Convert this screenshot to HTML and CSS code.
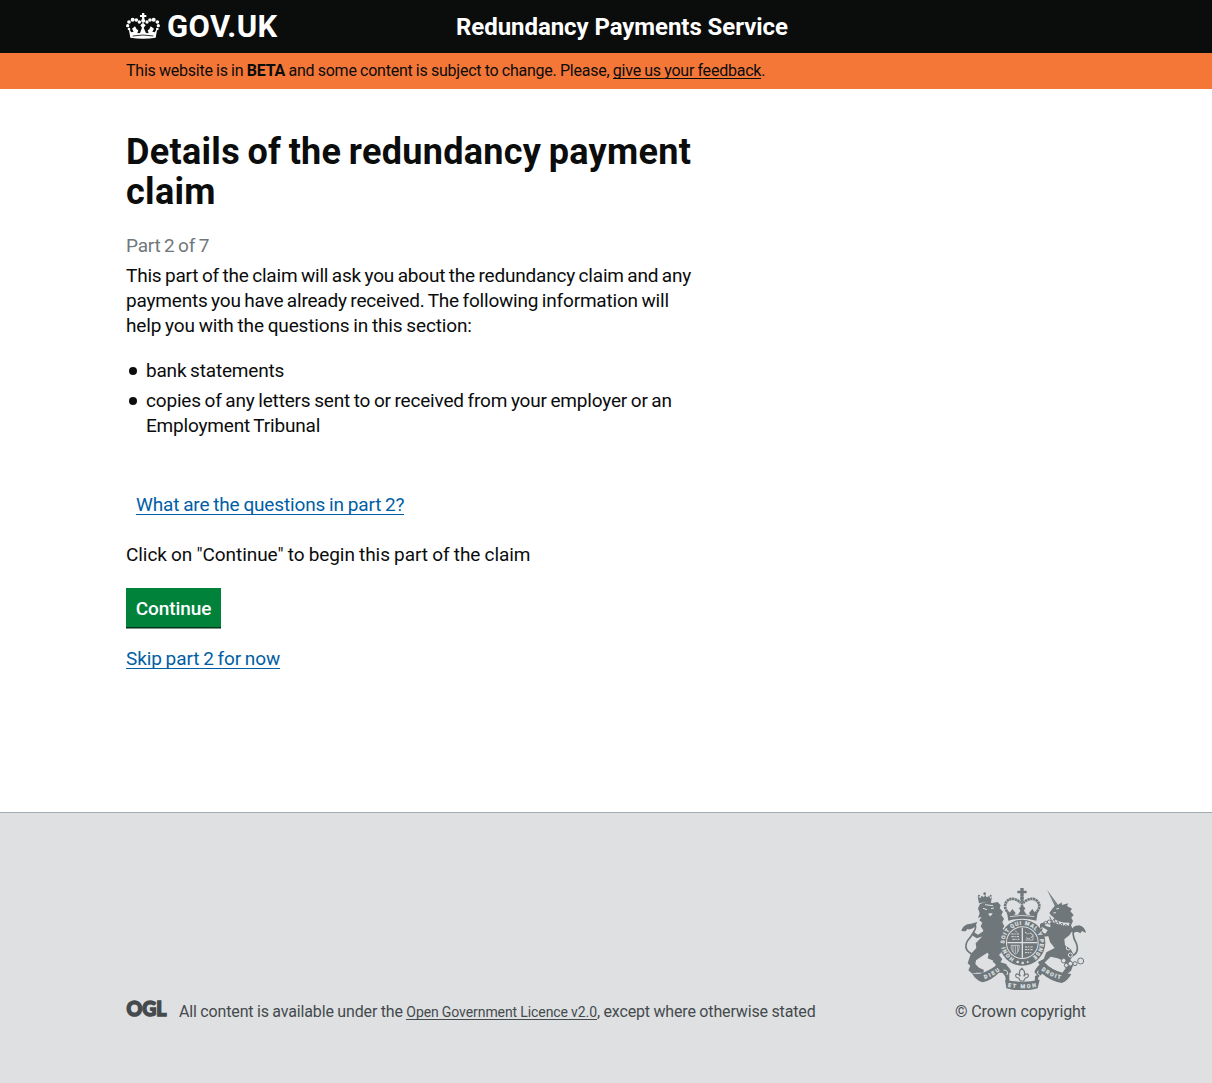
FILE: index.html
```html
<!DOCTYPE html>
<html lang="en">
<head>
<meta charset="utf-8">
<title>Redundancy Payments Service</title>
<link rel="stylesheet" href="styles.css">
</head>
<body>
<header class="header">
  <div class="wrap header-row">
    <a class="brand" href="#">
      <svg class="crown" viewBox="0 0 102 78" fill="#fff" aria-hidden="true">
        <path d="M48 0h7v6h6v6h-6v7h-7v-7h-6V6h6z"/>
        <circle cx="51.500" cy="23" r="6"/>
        <g><circle cx="9" cy="27" r="5.500"/><circle cx="20" cy="20" r="6"/><circle cx="31" cy="21" r="5.500"/><circle cx="40" cy="27" r="5"/><circle cx="5" cy="38" r="5"/><circle cx="9" cy="48" r="4"/><circle cx="63" cy="27" r="5"/><circle cx="72" cy="21" r="5.500"/><circle cx="83" cy="20" r="6"/><circle cx="94" cy="27" r="5.500"/><circle cx="97" cy="38" r="5"/><circle cx="94" cy="48" r="4"/></g>
        <path d="M13 74 8 46l8 12 7-2-5-9 9-7 5 9 5 3-3 9 8-1 6-16-5-7 8-8 8 8-6 7 7 16 8 1-3-9 5-3 4-9 10 7-5 9 7 2 8-12-5 28Q51 80 13 74z"/>
        <path d="M20 69Q51 63 82 69" fill="none" stroke="#0b0c0c" stroke-width="2.500"/>
      </svg>
      <span class="brand-name">GOV.UK</span>
    </a>
    <span class="service">Redundancy Payments Service</span>
  </div>
</header>
<div class="beta">
  <p class="wrap beta-text">This website is in <strong>BETA</strong> and some content is subject to change. Please, <a href="#">give us your feedback</a>.</p>
</div>
<main class="wrap main">
  <h1>Details of the redundancy payment<br>claim</h1>
  <p class="part">Part 2 of 7</p>
  <p>This part of the claim will ask you about the redundancy claim and any<br>payments you have already received. The following information will<br><span class="relaxed">help you with the questions in this section:</span></p>
  <ul class="list">
    <li>bank statements</li>
    <li>copies of any letters sent to or received from your employer or an<br>Employment Tribunal</li>
  </ul>
  <p class="questions relaxed"><a href="#">What are the questions in part 2?</a></p>
  <p class="hint">Click on "Continue" to begin this part of the claim</p>
  <button class="button">Continue</button>
  <p class="skip"><a href="#">Skip part 2 for now</a></p>
</main>
<footer class="footer">
  <div class="wrap footer-row">
    <svg class="ogl" viewBox="0 0 41 20" aria-label="OGL"><text x="0.500" y="16" textLength="40" lengthAdjust="spacingAndGlyphs">OGL</text></svg>
    <p class="licence">All content is available under the <a href="#">Open Government Licence v2.0</a>, except where otherwise stated</p>
    <div class="copyright">
      <svg class="arms" viewBox="33 24 375 306" fill="#6f777b" aria-hidden="true">
        <defs>
          <path id="garter" d="M193 235A53 53 0 1 1 241 235"/>
          <path id="dieu" d="M104 297Q131 288 155 268"/>
          <path id="etmon" d="M173 320Q216 330 262 320"/>
          <path id="droit" d="M274 270Q302 292 338 299"/>
        </defs>
        <g>
          <path d="M87 70 83 49l8 6 4-8 7 5 3-8 5 8 8-4 3 8 5-6-4 21Q104 64 87 70z"/>
          <circle cx="104" cy="41" r="4"/>
          <circle cx="87" cy="47" r="3"/><circle cx="122" cy="47" r="3"/>
          <path d="M90 72Q106 64 127 69L143 66 152 76 149 85 159 95 154 105 162 116 157 127 163 139 158 146 165 160 158 177 163 202 153 219 147 224 157 238 151 247 137 251 128 246 133 236 121 228 112 218 98 227 78 241 76 252 87 263 101 269 101 278 80 278 67 281 55 271 61 257 53 250 62 223 79 204 77 190 96 170 100 151 92 139 97 128 88 121 95 110 84 114 89 100 84 85z"/>
          <path d="M105 151 84 164 72 157 66 166 80 175 102 168zM118 215l21 13 13 21 18 3-2 12-17 4-13-8-4-16-21-9z"/>
          <path d="M70 224Q38 211 52 183Q63 171 73 153Q85 129 60 136Q45 137 37 153" fill="none" stroke="#6f777b" stroke-width="5"/>
          <path d="M34 153Q39 132 63 131L82 126 75 141Q60 151 52 147L47 154z"/>
          <path d="M99 85l12 4M123 86l9-2M105 74l24 3" fill="none" stroke="#dee0e2" stroke-width="3"/>
          <path d="M116 100h12l-3 5-4 4-5-4z" fill="#dee0e2"/>
        </g>
        <g>
          <path d="M291 29 325 76 315 79z"/>
          <path d="M292 33 320 76" stroke="#dee0e2" stroke-width="1.500" stroke-dasharray="3 5"/>
          <path d="M316 76 325 74 335 67 336 75 355 70 351 78 366 86 361 94 371 105 364 113 369 123 363 136 369 150 358 166 343 178 345 196 362 207 371 224 361 239 370 254 363 272 349 284 336 280 347 265 342 243 323 235 302 230 280 251 268 254 264 246 281 237 289 217 314 204 300 186 295 169 275 170 264 159 270 146 279 145 274 155 286 161 293 151 278 142 270 145 270 132 281 127 287 138 301 142 301 130 313 114 303 106 298 99 306 88z"/>
          <path d="M299 114Q323 134 359 133" fill="none" stroke="#dee0e2" stroke-width="9"/>
          <path d="m299 110 7 15 6-8 5 14 7-7 4 13 8-8 3 12 8-8 10 8 4-13" fill="none" stroke="#6f777b" stroke-width="3"/>
          <path d="M355 230Q391 225 379 190Q361 158 376 144Q395 131 404 154" fill="none" stroke="#6f777b" stroke-width="5"/>
          <path d="M362 153Q371 134 389 137Q403 142 408 159L396 153 391 160Q379 150 371 160z"/>
          <g fill="none" stroke="#6f777b" stroke-width="3"><circle cx="298" cy="126" r="6"/><circle cx="287" cy="128" r="4"/><circle cx="375" cy="251" r="6"/><circle cx="392" cy="243" r="9"/></g>
          <g fill="#dee0e2" stroke="#6f777b" stroke-width="3"><circle cx="341" cy="242" r="7"/><circle cx="349" cy="256" r="6"/><circle cx="361" cy="251" r="7"/></g>
          <g fill="none" stroke="#dee0e2" stroke-width="3"><circle cx="355" cy="204" r="6"/><circle cx="361" cy="225" r="6"/></g>
          <path d="m319 87 8-2M310 99l8-1" stroke="#dee0e2" stroke-width="3"/>
        </g>
        <g>
          <path d="M211 24h10v8h9v8h-9v9h-10v-9h-9v-8h9z"/><circle cx="216" cy="54" r="6"/>
          <g fill="none" stroke="#6f777b" stroke-width="8" stroke-dasharray="7 1.500"><path d="M177 101Q158 82 170 64Q187 47 212 68M255 101Q276 82 263 64Q245 47 220 68M216 58v25"/></g>
          <path d="M175 122 170 91l8 9 9-13 10 12-4 6 11-1 7-12-4-8 10-6 9 6-4 8 8 12 11 1-4-6 10-12 9 13 8-9-5 31Q216 111 175 122z"/>
          <path d="M180 110Q216 102 253 110" fill="none" stroke="#dee0e2" stroke-width="2.500"/>
        </g>
        <circle cx="217" cy="188" r="69"/>
        <circle cx="217" cy="188" r="49" fill="#dee0e2"/>
        <circle cx="217" cy="188" r="46"/>
        <g fill="none" stroke="#dee0e2">
          <path d="M217 143v90M172 188h90" stroke-width="4"/>
          <path d="M184 162h25M184 170h25M187 178h21M225 156l8 6 10-3 6 9-12 9-9-4M225 201h25M225 209h23M225 218h19" stroke-width="3" stroke-dasharray="7 2 4 3"/>
          <path d="M194 152l8 5M226 180h23V162M183 196h25q0 20-12 27-13-9-13-27zM189 196v20M196 196v25M203 196v20" stroke-width="2"/>
        </g>
        <text class="motto garter"><textPath href="#garter" textLength="274">HONI SOIT QUI MAL Y PENSE</textPath></text>
        <g fill="#dee0e2"><circle cx="203" cy="246" r="4"/><circle cx="218" cy="249" r="4"/><circle cx="233" cy="246" r="3"/></g>
        <path d="M67 282 90 281Q122 272 151 246Q176 254 184 276L165 288 158 279 147 278Q124 301 98 307Q79 302 67 282z"/>
        <path d="M282 246Q304 270 340 279L364 282Q353 303 335 309Q300 302 277 281L266 291 253 276Q262 254 282 246z"/>
        <path d="M165 299Q216 311 269 299L263 325Q216 338 169 325z"/>
        <path d="M163 278q3 13 6 29l9 4V280zM268 283q-4 10-5 26l-9 4 1-25z"/>
        <path d="M161 270Q177 271 171 285M264 272Q258 280 270 287" fill="none" stroke="#dee0e2" stroke-width="3"/>
        <path d="M216 265q13 12 5 24 9-12 14-4 1 8-9 9l-5 9h-10l-5-9q-10-1-9-9 5-8 14 4-8-15 5-24z" fill="#dee0e2" stroke="#6f777b" stroke-width="3.500"/>
        <text class="motto"><textPath href="#dieu" textLength="52">DIEU</textPath></text>
        <text class="motto"><textPath href="#etmon" textLength="86">ET MON</textPath></text>
        <text class="motto"><textPath href="#droit" textLength="63">DROIT</textPath></text>
      </svg>
      <a href="#">© Crown copyright</a>
    </div>
  </div>
</footer>
</body>
</html>
```
FILE: styles.css
```css
* { box-sizing: border-box; }
body { margin: 0; color: #0b0c0c; background: #fff; font: 19px/25px Roboto, "Liberation Sans", sans-serif; }
p, h1, ul { margin: 0; padding: 0; }
.wrap { width: 960px; margin: 0 auto; }
.header { height: 53px; background: #0b0c0c; color: #fff; }
.header-row { display: grid; grid-template-columns: 330px 1fr; height: 53px; align-items: center; }
a { color: #005ea5; text-decoration: none; border-bottom: 1px solid; display: inline-block; line-height: 18px; }
.brand { display: flex; gap: 7px; color: #fff; align-items: center; border: 0; }
.crown { width: 34px; height: 26px; margin-bottom: 2px; }
.brand-name { font-size: 31px; line-height: 34px; font-weight: 700; letter-spacing: .4px; }
.service { font-size: 24px; line-height: 30px; font-weight: 700; letter-spacing: -.06px; }
.beta { height: 36px; background: #f47738; }
.beta-text { font-size: 16px; line-height: 20px; padding-top: 8px; white-space: nowrap; letter-spacing: -.225px; word-spacing: -.4px; }
.beta a { color: #0b0c0c; line-height: 14px; }
.main { height: 723px; padding-top: 43px; white-space: nowrap; letter-spacing: -.19px; word-spacing: -1px; }
h1 { font-size: 36px; line-height: 40px; font-weight: 700; letter-spacing: .3px; word-spacing: -1.8px; }
.part { color: #6f777b; margin-top: 21px; margin-bottom: 5px; }
.relaxed { letter-spacing: -.15px; word-spacing: -.7px; }
.list { list-style: none; margin-top: 20px; word-spacing: -.8px; }
.list li { position: relative; padding-left: 20px; margin-bottom: 5px; }
.list li::before { content: ""; position: absolute; left: 3px; top: 9px; width: 8px; height: 8px; border-radius: 50%; background: #0b0c0c; }
.questions { margin: 54px 0 25px 10px; }
.hint { letter-spacing: -.07px; word-spacing: -.4px; }
.button { display: block; width: 95px; height: 40px; margin-top: 21px; padding: 0; border: 0; background: #00823b; color: #fff; font: 500 19px/41px Roboto, sans-serif; letter-spacing: -.1px; box-shadow: inset 0 -1px #003618, 0 1px #7d9687; }
.skip { margin-top: 18px; letter-spacing: -.06px; }
.footer { height: 271px; border-top: 1px solid #a1acb2; background: #dee0e2; color: #454a4c; }
.footer a { color: inherit; }
.footer-row { height: 209px; display: grid; grid-template-columns: 53px 1fr 131px; align-items: end; font-size: 16px; line-height: 20px; }
.ogl { width: 41px; height: 20px; margin-bottom: 2px; overflow: visible; }
.ogl text { font: 900 21px Lato, sans-serif; fill: #454a4c; stroke: #454a4c; stroke-width: 1.5; }
.licence { white-space: nowrap; letter-spacing: -.145px; word-spacing: -.3px; }
.licence a { font-size: 14px; line-height: 13px; letter-spacing: -.07px; }
.copyright { display: flex; flex-direction: column; align-items: flex-end; letter-spacing: -.08px; }
.copyright a { border: 0; white-space: nowrap; line-height: 20px; margin-top: 12px; }
.arms { width: 125px; height: 102px; }
.motto { font: 700 16px Roboto, sans-serif; fill: #dee0e2; stroke: #dee0e2; stroke-width: .7; }
.garter { font-size: 16px; }
```
